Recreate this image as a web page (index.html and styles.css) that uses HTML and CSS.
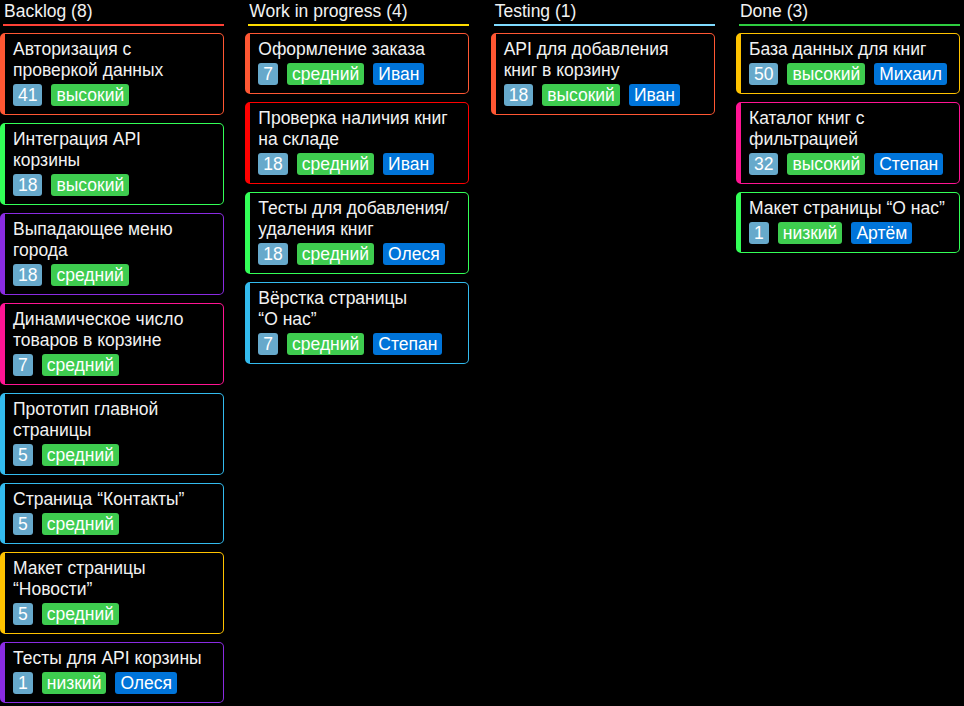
FILE: index.html
```html
<!DOCTYPE html>
<html lang="ru">
<head>
<meta charset="utf-8">
<link rel="stylesheet" href="styles.css">
</head>
<body>
<div class="board">
  <section class="column">
    <h2 class="col-title t-red">Backlog (8)</h2>
    <div class="cards">
      <div class="card c-orange"><div class="title">Авторизация с проверкой данных</div><div class="tags"><span class="tag num">41</span><span class="tag prio">высокий</span></div></div>
      <div class="card c-green"><div class="title">Интеграция API корзины</div><div class="tags"><span class="tag num">18</span><span class="tag prio">высокий</span></div></div>
      <div class="card c-purple"><div class="title">Выпадающее меню города</div><div class="tags"><span class="tag num">18</span><span class="tag prio">средний</span></div></div>
      <div class="card c-pink"><div class="title">Динамическое число товаров в корзине</div><div class="tags"><span class="tag num">7</span><span class="tag prio">средний</span></div></div>
      <div class="card c-blue"><div class="title">Прототип главной страницы</div><div class="tags"><span class="tag num">5</span><span class="tag prio">средний</span></div></div>
      <div class="card c-blue"><div class="title">Страница “Контакты”</div><div class="tags"><span class="tag num">5</span><span class="tag prio">средний</span></div></div>
      <div class="card c-yellow"><div class="title">Макет страницы “Новости”</div><div class="tags"><span class="tag num">5</span><span class="tag prio">средний</span></div></div>
      <div class="card c-purple"><div class="title">Тесты для API корзины</div><div class="tags"><span class="tag num">1</span><span class="tag prio">низкий</span><span class="tag user">Олеся</span></div></div>
    </div>
  </section>
  <section class="column">
    <h2 class="col-title t-yellow">Work in progress (4)</h2>
    <div class="cards">
      <div class="card c-orange"><div class="title">Оформление заказа</div><div class="tags"><span class="tag num">7</span><span class="tag prio">средний</span><span class="tag user">Иван</span></div></div>
      <div class="card c-red"><div class="title">Проверка наличия книг на складе</div><div class="tags"><span class="tag num">18</span><span class="tag prio">средний</span><span class="tag user">Иван</span></div></div>
      <div class="card c-green"><div class="title">Тесты для добавления/ удаления книг</div><div class="tags"><span class="tag num">18</span><span class="tag prio">средний</span><span class="tag user">Олеся</span></div></div>
      <div class="card c-blue"><div class="title">Вёрстка страницы<br>“О нас”</div><div class="tags"><span class="tag num">7</span><span class="tag prio">средний</span><span class="tag user">Степан</span></div></div>
    </div>
  </section>
  <section class="column">
    <h2 class="col-title t-aqua">Testing (1)</h2>
    <div class="cards">
      <div class="card c-orange"><div class="title">API для добавления книг в корзину</div><div class="tags"><span class="tag num">18</span><span class="tag prio">высокий</span><span class="tag user">Иван</span></div></div>
    </div>
  </section>
  <section class="column">
    <h2 class="col-title t-green">Done (3)</h2>
    <div class="cards">
      <div class="card c-yellow"><div class="title">База данных для книг</div><div class="tags"><span class="tag num">50</span><span class="tag prio">высокий</span><span class="tag user">Михаил</span></div></div>
      <div class="card c-pink"><div class="title">Каталог книг с фильтрацией</div><div class="tags"><span class="tag num">32</span><span class="tag prio">высокий</span><span class="tag user">Степан</span></div></div>
      <div class="card c-green"><div class="title">Макет страницы “О нас”</div><div class="tags"><span class="tag num">1</span><span class="tag prio">низкий</span><span class="tag user">Артём</span></div></div>
    </div>
  </section>
</div>
</body>
</html>
```

FILE: styles.css
```css
html, body {
  margin: 0;
  padding: 0;
  background: #000;
}
body {
  font-family: "Liberation Sans", Arial, sans-serif;
  color: #f2f2f2;
}
.board {
  width: 960px;
  display: grid;
  grid-template-columns: repeat(4, 224px);
  column-gap: 21.33px;
}
.column {
  display: flex;
  flex-direction: column;
}
.col-title {
  margin: 0 0 0 3px;
  padding: 0 0 2px 1px;
  font-size: 17.5px;
  font-weight: normal;
  line-height: 22px;
  border-bottom: 2px solid;
  color: #f2f2f2;
}
.t-red { border-color: #ff4136; }
.t-yellow { border-color: #ffdc00; }
.t-aqua { border-color: #7fdbff; }
.t-green { border-color: #2ecc40; }
.cards {
  display: flex;
  flex-direction: column;
  gap: 8px;
  margin-top: 7px;
}
.card {
  border: 1px solid;
  border-left-width: 5px;
  border-radius: 5px;
  padding: 5px 12px 8px 8px;
}
.title {
  font-size: 17.5px;
  line-height: 21px;
}
.tags {
  display: flex;
  gap: 9px;
  margin-top: 3px;
}
.tag {
  font-size: 17.5px;
  line-height: 22px;
  padding: 0 5px;
  border-radius: 3px;
  color: #fff;
}
.num { background: #67a9cb; }
.prio { background: #3ecc4f; }
.user { background: #0074d9; }
.c-orange { border-color: #ff5733; }
.c-green { border-color: #33ff57; }
.c-purple { border-color: #8a2be2; }
.c-pink { border-color: #ff1493; }
.c-blue { border-color: #33bbee; }
.c-yellow { border-color: #ffc300; }
.c-red { border-color: #ff0000; }
```
